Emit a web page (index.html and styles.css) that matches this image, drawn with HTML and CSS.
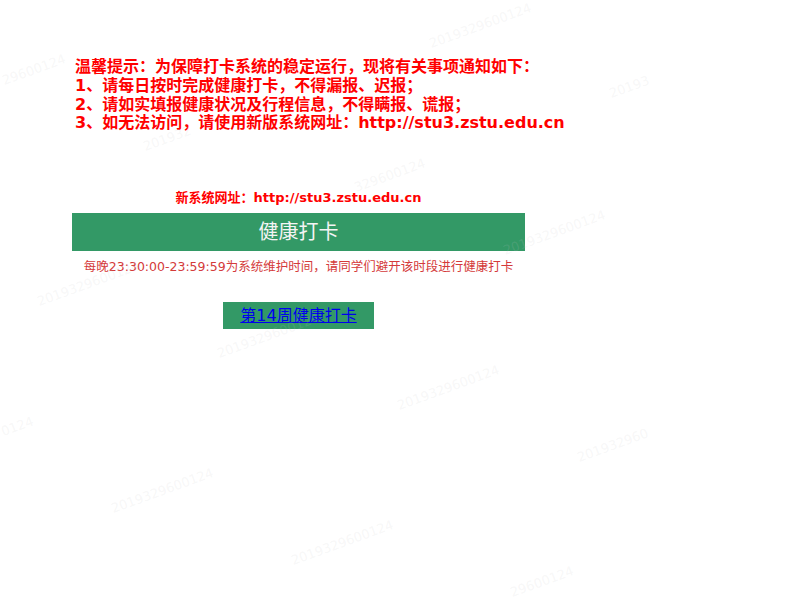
FILE: index.html
```html
<!DOCTYPE html>
<html lang="zh-CN">
<head>
<meta charset="utf-8">
<title>健康打卡</title>
<link rel="stylesheet" href="styles.css">
</head>
<body>
<div class="page">
  <div class="notice">
    <div class="line">温馨提示：为保障打卡系统的稳定运行，现将有关事项通知如下：</div>
    <div class="line">1、请每日按时完成健康打卡，不得漏报、迟报；</div>
    <div class="line">2、请如实填报健康状况及行程信息，不得瞒报、谎报；</div>
    <div class="line">3、如无法访问，请使用新版系统网址：http://stu3.zstu.edu.cn</div>
  </div>
  <div class="center">
    <p class="newurl">新系统网址：http://stu3.zstu.edu.cn</p>
    <div class="bar">健康打卡</div>
    <p class="tip">每晚23:30:00-23:59:59为系统维护时间，请同学们避开该时段进行健康打卡</p>
    <div class="btn-row"><a class="btn" href="#">第14周健康打卡</a></div>
  </div>
</div>
<div class="watermarks" aria-hidden="true">
  <span class="wm wm1">2019329600124</span>
  <span class="wm wm2">20193</span>
  <span class="wm wm3">329600124</span>
  <span class="wm wm4">201932</span>
  <span class="wm wm5">29600124</span>
  <span class="wm wm6">2019329600124</span>
  <span class="wm wm7">2019329600124</span>
  <span class="wm wm8">2019329600124</span>
  <span class="wm wm9">2019329600124</span>
  <span class="wm wm10">201932960</span>
  <span class="wm wm11">2019329600124</span>
  <span class="wm wm12">2019329600124</span>
  <span class="wm wm13">0124</span>
  <span class="wm wm14">29600124</span>
</div>
</body>
</html>
```
FILE: styles.css
```css
html, body {
  margin: 0;
  padding: 0;
  background: #ffffff;
}
body {
  font-family: "DejaVu Sans", "Noto Sans CJK SC", sans-serif;
  position: relative;
  width: 800px;
  height: 600px;
  overflow: hidden;
}
.page {
  padding: 58px 0 0 72px;
}
.notice {
  padding-left: 3px;
  color: #ff0000;
  font-size: 16px;
  font-weight: bold;
  line-height: 18.75px;
  white-space: nowrap;
}
.center {
  width: 453px;
  text-align: center;
}
.newurl {
  margin: 57px 0 0 0;
  color: #ff0000;
  font-size: 13px;
  font-weight: bold;
  line-height: 16px;
}
.bar {
  margin-top: 7px;
  height: 38px;
  line-height: 38px;
  background: #339966;
  color: #f4f4f4;
  font-size: 20px;
}
.tip {
  margin: 8px 0 0 0;
  color: #d43a3a;
  font-size: 12.5px;
  line-height: 16px;
  white-space: nowrap;
}
.btn-row {
  margin-top: 27px;
  display: flex;
  justify-content: center;
}
.btn {
  display: block;
  width: 151px;
  height: 27px;
  line-height: 27px;
  background: #339966;
  color: #0000ee;
  font-size: 16px;
  text-decoration: underline;
}
.watermarks {
  position: absolute;
  left: 0;
  top: 0;
  width: 800px;
  height: 600px;
  pointer-events: none;
}
.wm {
  position: absolute;
  font-family: "DejaVu Sans", sans-serif;
  font-size: 13px;
  line-height: 13px;
  white-space: nowrap;
  color: rgba(200, 200, 200, 0.15);
  transform: rotate(-20deg);
  transform-origin: 0 100%;
}
.wm1 { left: 432px; top: 37px; }
.wm2 { left: 612px; top: 87px; }
.wm3 { left: 357px; top: 181px; }
.wm4 { left: 146px; top: 140px; }
.wm5 { left: 5px; top: 74px; }
.wm6 { left: 506px; top: 244px; }
.wm7 { left: 220px; top: 347px; }
.wm8 { left: 40px; top: 295px; }
.wm9 { left: 400px; top: 399px; }
.wm10 { left: 580px; top: 451px; }
.wm11 { left: 114px; top: 502px; }
.wm12 { left: 294px; top: 554px; }
.wm13 { left: 4px; top: 425px; }
.wm14 { left: 513px; top: 586px; }
```
